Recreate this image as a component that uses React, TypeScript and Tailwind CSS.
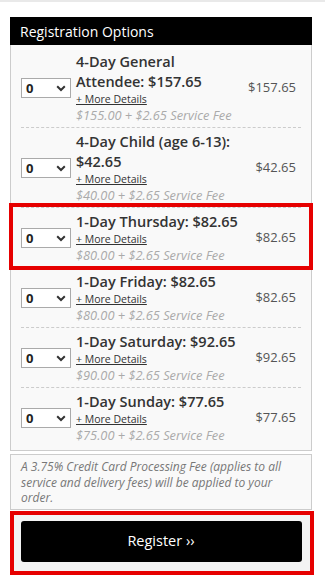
import React from "react";

const rows = [
  { title: "4-Day General Attendee: $157.65", price: "$157.65", fee: "$155.00 + $2.65 Service Fee" },
  { title: "4-Day Child (age 6-13): $42.65", price: "$42.65", fee: "$40.00 + $2.65 Service Fee" },
  { title: "1-Day Thursday: $82.65", price: "$82.65", fee: "$80.00 + $2.65 Service Fee", hl: true },
  { title: "1-Day Friday: $82.65", price: "$82.65", fee: "$80.00 + $2.65 Service Fee" },
  { title: "1-Day Saturday: $92.65", price: "$92.65", fee: "$90.00 + $2.65 Service Fee" },
  { title: "1-Day Sunday: $77.65", price: "$77.65", fee: "$75.00 + $2.65 Service Fee" },
];

function Select() {
  return (
    <div className="flex h-[20px] w-[50px] shrink-0 items-center justify-between border border-[#aaaaaa] bg-white pl-[4px] pr-[4px]">
      <span className="text-[13px] font-bold leading-none text-[#222]">0</span>
      <svg width="10" height="7" viewBox="0 0 10 7" className="mt-[1px]">
        <path d="M1.2 1.3 L5 5 L8.8 1.3" fill="none" stroke="#333" strokeWidth="2" />
      </svg>
    </div>
  );
}

export default function App() {
  return (
    <div className="min-h-[581px] w-[325px] bg-white" style={{ fontFamily: '"Open Sans", sans-serif' }}>
      <div className="h-[2px] w-full bg-[#e9e9e9]" />
      <div className="ml-[10px] mt-[15px] w-[302px]">
        <div className="flex h-[28px] items-center bg-black pl-[10px] text-[14px] text-white">Registration Options</div>
        <div className="border-x border-b border-[#cccccc] bg-[#f9f9f9] pb-[3px] pt-[3px]">
          {rows.map((r, i) => (
            <div
              key={i}
              className={`relative mx-[10px] flex items-center pb-[3px] pt-[4px] ${i < rows.length - 1 ? "border-b border-dashed border-[#cccccc]" : ""}`}
            >
              {r.hl && <div className="pointer-events-none absolute -bottom-[3px] -left-[12px] -right-[12px] -top-[5px] border-[4px] border-[#e60000]" />}
              <Select />
              <div className="ml-[5px] min-w-0 flex-1">
                <div className="text-[14.5px] font-semibold leading-[20px] text-[#333]">{r.title}</div>
                <div className="mt-[1px] text-[10.5px] leading-[13px] text-[#333] underline">+ More Details</div>
                <div className="text-[12.8px] italic leading-[18px] text-[#aaaaaa]">{r.fee}</div>
              </div>
              <div className="w-[56px] shrink-0 pr-[5px] text-right text-[13px] text-[#555]">{r.price}</div>
            </div>
          ))}
        </div>
        <div className="mt-[3px] border border-[#cccccc] bg-[#f9f9f9] px-[10px] pb-[3px] pt-[4px] text-[12px] italic leading-[15.5px] text-[#777]">
          A 3.75% Credit Card Processing Fee (applies to all service and delivery fees) will be applied to your order.
        </div>
      </div>
      <div className="ml-[10px] mt-[1px] w-[304px] border-[4.5px] border-[#e60000] bg-[#f3f3f3] pb-[9px] pl-[6.5px] pr-[8.5px] pt-[6px]">
        <button className="flex h-[41px] w-full items-center justify-center rounded-[3px] bg-black text-[14.5px] text-white">
          Register ››
        </button>
      </div>
    </div>
  );
}
